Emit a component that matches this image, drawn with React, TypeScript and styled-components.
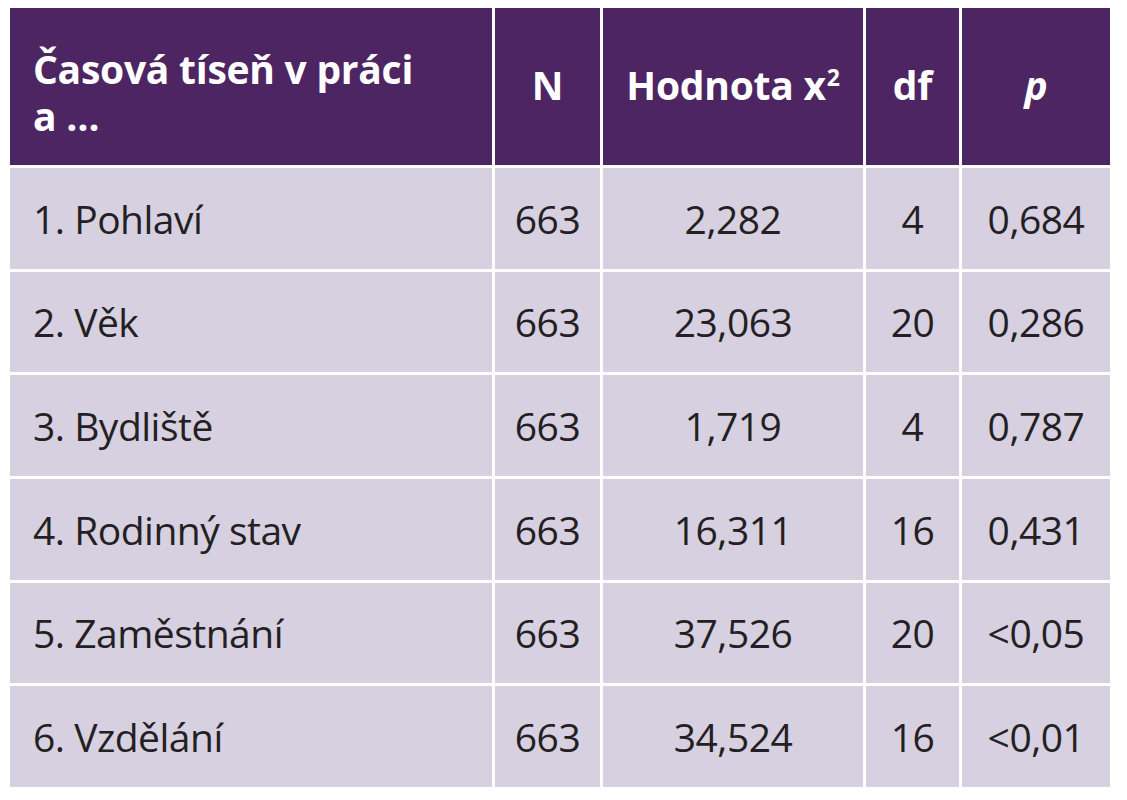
import React from "react";
import styled, { createGlobalStyle } from "styled-components";

interface Row {
  label: string;
  n: number;
  chi: string;
  df: number;
  p: string;
}

const GlobalStyle = createGlobalStyle`
  html, body {
    margin: 0;
    padding: 0;
    background: #ffffff;
  }
  body {
    font-family: "Open Sans", "Noto Sans", sans-serif;
  }
`;

const Page = styled.div`
  padding: 8px 0 0 10px;
`;

const Table = styled.div`
  display: grid;
  grid-template-columns: 482px 105px 260px 93px 148px;
  grid-template-rows: 157px repeat(6, 1fr);
  height: 779px;
  width: 1100px;
  gap: 3px;
  background: #ffffff;
`;

const HeadCell = styled.div<{ $left?: boolean }>`
  background: #4e2563;
  color: #ffffff;
  font-weight: 700;
  font-size: 39px;
  line-height: 47px;
  letter-spacing: -0.25px;
  display: flex;
  align-items: center;
  justify-content: ${({ $left }) => ($left ? "flex-start" : "center")};
  padding: ${({ $left }) => ($left ? "10px 0 0 23px" : "0 0 4px 0")};
`;

const HeadText = styled.span`
  sup {
    font-size: 23px;
    line-height: 0;
    vertical-align: 14px;
    margin-left: 1px;
  }
`;

const Cell = styled.div<{ $left?: boolean }>`
  background: #d7d0e1;
  color: #231f22;
  font-size: 39px;
  letter-spacing: -0.5px;
  display: flex;
  align-items: center;
  justify-content: ${({ $left }) => ($left ? "flex-start" : "center")};
  padding: ${({ $left }) => ($left ? "0 0 0 23px" : "0")};
`;

const Italic = styled.span`
  font-style: italic;
`;

const rows: Row[] = [
  { label: "1. Pohlaví", n: 663, chi: "2,282", df: 4, p: "0,684" },
  { label: "2. Věk", n: 663, chi: "23,063", df: 20, p: "0,286" },
  { label: "3. Bydliště", n: 663, chi: "1,719", df: 4, p: "0,787" },
  { label: "4. Rodinný stav", n: 663, chi: "16,311", df: 16, p: "0,431" },
  { label: "5. Zaměstnání", n: 663, chi: "37,526", df: 20, p: "<0,05" },
  { label: "6. Vzdělání", n: 663, chi: "34,524", df: 16, p: "<0,01" },
];

const App: React.FC = () => {
  return (
    <>
      <GlobalStyle />
      <Page>
        <Table>
          <HeadCell $left>
            <HeadText>
              Časová tíseň v práci
              <br />a …
            </HeadText>
          </HeadCell>
          <HeadCell>
            <HeadText>N</HeadText>
          </HeadCell>
          <HeadCell>
            <HeadText>
              Hodnota x<sup>2</sup>
            </HeadText>
          </HeadCell>
          <HeadCell>
            <HeadText>df</HeadText>
          </HeadCell>
          <HeadCell>
            <HeadText>
              <Italic>p</Italic>
            </HeadText>
          </HeadCell>
          {rows.map((r) => (
            <React.Fragment key={r.label}>
              <Cell $left>{r.label}</Cell>
              <Cell>{r.n}</Cell>
              <Cell>{r.chi}</Cell>
              <Cell>{r.df}</Cell>
              <Cell>{r.p}</Cell>
            </React.Fragment>
          ))}
        </Table>
      </Page>
    </>
  );
};

export default App;
